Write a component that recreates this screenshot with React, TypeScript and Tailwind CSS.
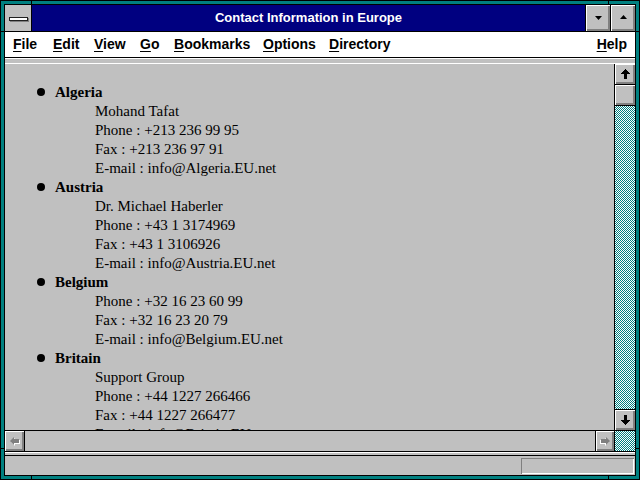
import React from 'react';

const entries = [
  {
    country: 'Algeria',
    lines: ['Mohand Tafat', 'Phone : +213 236 99 95', 'Fax : +213 236 97 91', 'E-mail : info@Algeria.EU.net'],
  },
  {
    country: 'Austria',
    lines: ['Dr. Michael Haberler', 'Phone : +43 1 3174969', 'Fax : +43 1 3106926', 'E-mail : info@Austria.EU.net'],
  },
  {
    country: 'Belgium',
    lines: ['Phone : +32 16 23 60 99', 'Fax : +32 16 23 20 79', 'E-mail : info@Belgium.EU.net'],
  },
  {
    country: 'Britain',
    lines: ['Support Group', 'Phone : +44 1227 266466', 'Fax : +44 1227 266477', 'E-mail : info@Britain.EU.net'],
  },
  {
    country: 'Bulgaria',
    lines: ['Phone : +359 2 71 30 52', 'Fax : +359 2 70 82 67', 'E-mail : info@Bulgaria.EU.net'],
  },
];

// menu items with fixed slot widths so the labels land where the old menu bar put them
const menuItems = [
  { key: 'F', rest: 'ile', w: 'w-[40px]' },
  { key: 'E', rest: 'dit', w: 'w-[41px]' },
  { key: 'V', rest: 'iew', w: 'w-[46px]' },
  { key: 'G', rest: 'o', w: 'w-[34px]' },
  { key: 'B', rest: 'ookmarks', w: 'w-[89px]' },
  { key: 'O', rest: 'ptions', w: 'w-[66px]' },
  { key: 'D', rest: 'irectory', w: 'w-[80px]' },
];

const bevel = 'bg-[#c0c0c0] shadow-[inset_1px_1px_0_#ffffff,inset_-2px_-2px_0_#808080]';
const dither =
  'bg-[repeating-conic-gradient(#008080_0%_25%,#ffffff_0%_50%)] bg-[length:2px_2px]';

function BlackArrow({ down = false }: { down?: boolean }) {
  return (
    <svg
      width="9"
      height="10"
      viewBox="0 0 9 10"
      shapeRendering="crispEdges"
      className={`shrink-0 ${down ? 'rotate-180' : ''}`}
    >
      <polygon points="4.5,0 9,5 6,5 6,10 3,10 3,5 0,5" fill="#000" />
    </svg>
  );
}

function GrayArrow({ right = false }: { right?: boolean }) {
  return (
    <svg width="10" height="9" viewBox="0 0 10 9" className={`shrink-0 ${right ? '-scale-x-100' : ''}`}>
      <polygon points="1,5 5,1 5,3 10,3 10,7 5,7 5,9" fill="#ffffff" />
      <polygon points="0,4 4,0 4,2 9,2 9,6 4,6 4,8" fill="#808080" />
    </svg>
  );
}

export default function App() {
  return (
    <div className="w-[640px] h-[480px] relative bg-[#008080] border border-black p-[3px] font-['Liberation_Sans',Arial,sans-serif]">
      {/* resize notches in the frame */}
      <div className="absolute top-0 left-[30px] w-px h-[4px] bg-black" />
      <div className="absolute top-0 left-[607px] w-px h-[4px] bg-black" />
      <div className="absolute bottom-0 left-[30px] w-px h-[4px] bg-black" />
      <div className="absolute bottom-0 left-[607px] w-px h-[4px] bg-black" />
      <div className="absolute left-0 top-[30px] h-px w-[4px] bg-black" />
      <div className="absolute right-0 top-[30px] h-px w-[4px] bg-black" />
      <div className="absolute left-0 top-[447px] h-px w-[4px] bg-black" />
      <div className="absolute right-0 top-[447px] h-px w-[4px] bg-black" />

      <div className="h-full border border-black bg-[#c0c0c0] flex flex-col">
        {/* Title bar */}
        <div className="h-[27px] shrink-0 flex border-b border-black">
          <div className="w-[27px] border-r border-black bg-[#c0c0c0] flex items-center justify-center">
            <div className="w-[19px] h-[4px] bg-white border border-[#202020] shadow-[1px_1px_0_#808080] mt-[1px]" />
          </div>
          <div className="flex-1 bg-[#000080] text-white font-bold text-[13px] flex items-center justify-center">
            Contact Information in Europe
          </div>
          <div className="w-[25px] border-l border-black">
            <div className={`h-full flex items-center justify-center ${bevel}`}>
              <svg width="7" height="4" viewBox="0 0 7 4">
                <polygon points="0,0 7,0 3.5,4" fill="#000" />
              </svg>
            </div>
          </div>
          <div className="w-[25px] border-l border-black">
            <div className={`h-full flex items-center justify-center ${bevel}`}>
              <svg width="7" height="4" viewBox="0 0 7 4" className="-mt-[2px]">
                <polygon points="0,4 7,4 3.5,0" fill="#000" />
              </svg>
            </div>
          </div>
        </div>

        {/* Menu bar */}
        <div className="h-[26px] shrink-0 bg-white border-b border-black flex items-center pl-[8px] pr-[8px] text-[14px] font-bold text-black">
          {menuItems.map((m) => (
            <div key={m.key} className={`${m.w} shrink-0`}>
              <span className="underline underline-offset-[2px]">{m.key}</span>
              {m.rest}
            </div>
          ))}
          <div className="ml-auto">
            <span className="underline underline-offset-[2px]">H</span>elp
          </div>
        </div>
        <div className="h-[6px] shrink-0 border-t border-white border-b border-black bg-[#c0c0c0]" />

        {/* Document + vertical scrollbar */}
        <div className="h-[366px] shrink-0 flex">
          <div className="flex-1 overflow-hidden bg-[#c0c0c0] pl-[32px] pt-[19px] font-['Liberation_Serif','Times_New_Roman',serif] text-[15px] leading-[19px] text-black">
            {entries.map((e) => (
              <div key={e.country}>
                <div className="flex items-center h-[19px]">
                  <span className="w-[8px] h-[8px] rounded-full bg-black mr-[10px] -mt-[1px]" />
                  <span className="font-bold">{e.country}</span>
                </div>
                {e.lines.map((l) => (
                  <div key={l} className="pl-[58px] whitespace-nowrap">
                    {l}
                  </div>
                ))}
              </div>
            ))}
          </div>
          <div className="w-[21px] border-l border-black flex flex-col">
            <div className="h-[21px] border-b border-black">
              <div className={`h-full flex items-center justify-center ${bevel}`}>
                <BlackArrow />
              </div>
            </div>
            <div className="h-[21px] border-b border-black">
              <div className={`h-full ${bevel}`} />
            </div>
            <div className={`flex-1 ${dither}`} />
            <div className="h-[21px] border-t border-black">
              <div className={`h-full flex items-center justify-center ${bevel}`}>
                <BlackArrow down />
              </div>
            </div>
          </div>
        </div>

        {/* Horizontal scrollbar */}
        <div className="h-[21px] shrink-0 border-t border-black flex">
          <div className="w-[20px] border-r border-black">
            <div className={`h-full flex items-center justify-center ${bevel}`}>
              <GrayArrow />
            </div>
          </div>
          <div className="flex-1 bg-[#c0c0c0]" />
          <div className="w-[19px] border-l border-black">
            <div className={`h-full flex items-center justify-center ${bevel}`}>
              <GrayArrow right />
            </div>
          </div>
          <div className={`w-[21px] border-l border-black ${dither}`} />
        </div>
        <div className="h-[5px] shrink-0 border-y border-black bg-[#c0c0c0] shadow-[inset_0_1px_0_#ffffff]" />

        {/* Status bar */}
        <div className="flex-1 flex justify-end items-start pt-[2px] pr-[1px] bg-[#c0c0c0]">
          <div className="w-[113px] h-[16px] shadow-[inset_1px_1px_0_#808080,inset_-1px_-1px_0_#ffffff]" />
        </div>
      </div>
    </div>
  );
}
